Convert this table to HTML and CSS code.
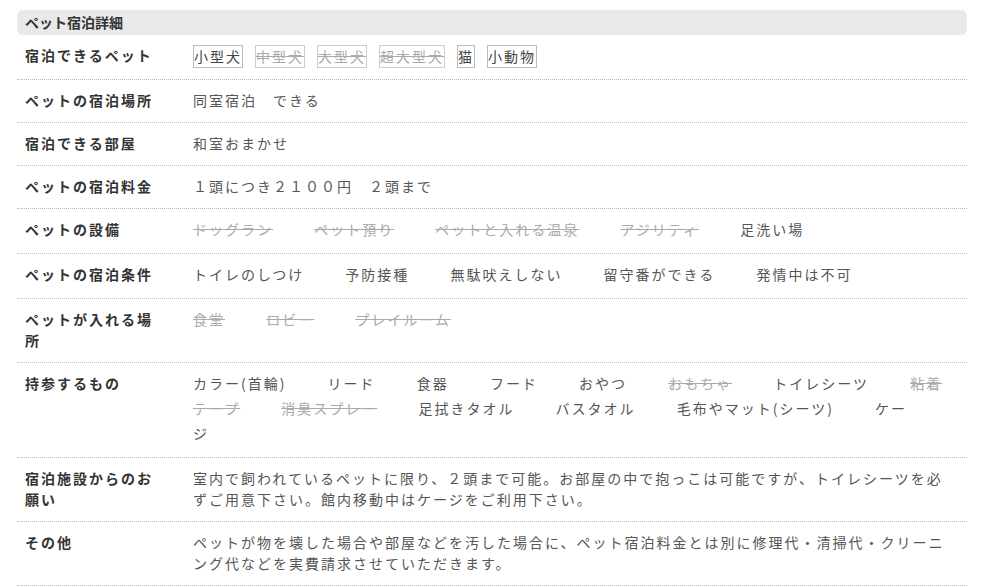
FILE: index.html
```html
<!DOCTYPE html>
<html lang="ja">
<head>
    <meta charset="UTF-8">
    <meta name="viewport" content="width=device-width, initial-scale=1.0">
    <title>ペット宿泊詳細</title>
    <link rel="stylesheet" href="styles.css">
</head>
<body>
    <div class="pet-detail">
        <h2 class="pet-title">ペット宿泊詳細</h2>

        <dl class="pet-row">
            <dt>宿泊できるペット</dt>
            <dd>
                <div class="tags">
                    <span class="tag">小型犬</span>
                    <span class="tag off">中型犬</span>
                    <span class="tag off">大型犬</span>
                    <span class="tag off">超大型犬</span>
                    <span class="tag">猫</span>
                    <span class="tag">小動物</span>
                </div>
            </dd>
        </dl>

        <dl class="pet-row">
            <dt>ペットの宿泊場所</dt>
            <dd>同室宿泊　できる</dd>
        </dl>

        <dl class="pet-row">
            <dt>宿泊できる部屋</dt>
            <dd>和室おまかせ</dd>
        </dl>

        <dl class="pet-row">
            <dt>ペットの宿泊料金</dt>
            <dd>１頭につき２１００円　２頭まで</dd>
        </dl>

        <dl class="pet-row">
            <dt>ペットの設備</dt>
            <dd class="items">
                <span class="off">ドッグラン</span>
                <span class="off">ペット預り</span>
                <span class="off">ペットと入れる温泉</span>
                <span class="off">アジリティ</span>
                <span>足洗い場</span>
            </dd>
        </dl>

        <dl class="pet-row">
            <dt>ペットの宿泊条件</dt>
            <dd class="items">
                <span>トイレのしつけ</span>
                <span>予防接種</span>
                <span>無駄吠えしない</span>
                <span>留守番ができる</span>
                <span>発情中は不可</span>
            </dd>
        </dl>

        <dl class="pet-row">
            <dt>ペットが入れる場所</dt>
            <dd class="items">
                <span class="off">食堂</span>
                <span class="off">ロビー</span>
                <span class="off">プレイルーム</span>
            </dd>
        </dl>

        <dl class="pet-row">
            <dt>持参するもの</dt>
            <dd class="items">
                <span>カラー(首輪)</span>
                <span>リード</span>
                <span>食器</span>
                <span>フード</span>
                <span>おやつ</span>
                <span class="off">おもちゃ</span>
                <span>トイレシーツ</span>
                <span class="off">粘着テープ</span>
                <span class="off">消臭スプレー</span>
                <span>足拭きタオル</span>
                <span>バスタオル</span>
                <span>毛布やマット(シーツ)</span>
                <span>ケージ</span>
            </dd>
        </dl>

        <dl class="pet-row">
            <dt>宿泊施設からのお願い</dt>
            <dd>室内で飼われているペットに限り、２頭まで可能。お部屋の中で抱っこは可能ですが、トイレシーツを必ずご用意下さい。館内移動中はケージをご利用下さい。</dd>
        </dl>

        <dl class="pet-row">
            <dt>その他</dt>
            <dd>ペットが物を壊した場合や部屋などを汚した場合に、ペット宿泊料金とは別に修理代・清掃代・クリーニング代などを実費請求させていただきます。</dd>
        </dl>
    </div>
</body>
</html>
```

FILE: styles.css
```css
body {
    font-family: "Noto Sans CJK JP", "Noto Sans", sans-serif;
    margin: 0;
    padding: 10px 26px 0 17px;
    background-color: #fff;
    color: #555;
}
.pet-title {
    margin: 0;
    padding: 0 8px;
    height: 25px;
    line-height: 25px;
    font-size: 14px;
    font-weight: bold;
    color: #333;
    background-color: #e9e9e9;
    border-radius: 6px;
}
.pet-row {
    display: grid;
    grid-template-columns: 140px 1fr;
    column-gap: 28px;
    margin: 0;
    padding: 10px 9px 11px 8px;
    border-bottom: 1px dotted #bbb;
    font-size: 14px;
    letter-spacing: 2px;
    line-height: 21px;
}
.pet-row dt {
    font-weight: bold;
    color: #333;
}
.pet-row dd {
    margin: 0;
    word-break: break-all;
}
.tags {
    display: flex;
    flex-wrap: wrap;
    gap: 12px;
}
.tag {
    border: 1px solid #bbb;
    color: #444;
}
.tag.off {
    border-color: #ccc;
}
.off {
    color: #aaa;
    text-decoration: line-through;
}
.pet-row .items {
    margin-top: -2px;
    line-height: 25px;
}
.items span {
    margin-right: 36px;
}
```
